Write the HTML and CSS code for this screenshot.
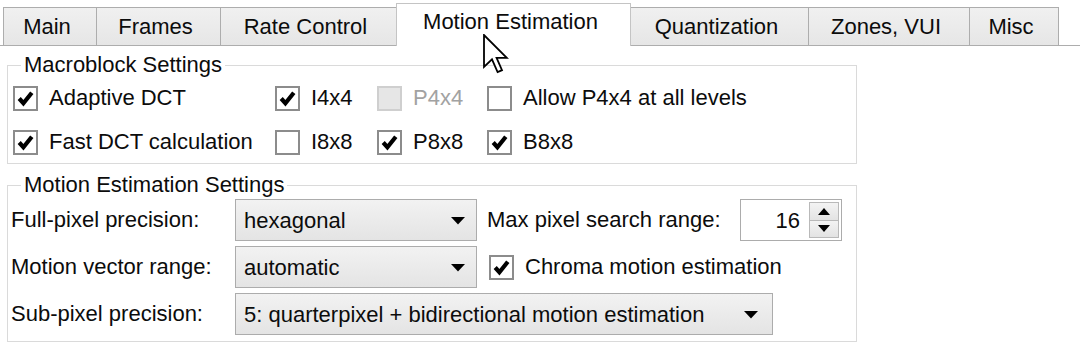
FILE: index.html
```html
<!DOCTYPE html>
<html>
<head>
<meta charset="utf-8">
<link rel="stylesheet" href="styles.css">
</head>
<body>
<div class="tabbar">
  <div class="tab w-main">Main</div>
  <div class="tab w-frames">Frames</div>
  <div class="tab w-rate">Rate Control</div>
  <div class="tab active w-motion">Motion Estimation</div>
  <div class="tab w-quant">Quantization</div>
  <div class="tab w-zones">Zones, VUI</div>
  <div class="tab last w-misc">Misc</div>
</div>

<fieldset class="group g1">
  <legend>Macroblock Settings</legend>
  <div class="mb-grid">
    <label class="cbx"><span class="box"><svg viewBox="0 0 20 20"><polyline points="4,10 8,14.5 16,4.5"/></svg></span>Adaptive DCT</label>
    <label class="cbx"><span class="box"><svg viewBox="0 0 20 20"><polyline points="4,10 8,14.5 16,4.5"/></svg></span>I4x4</label>
    <label class="cbx disabled"><span class="box"></span>P4x4</label>
    <label class="cbx"><span class="box"></span>Allow P4x4 at all levels</label>
    <label class="cbx"><span class="box"><svg viewBox="0 0 20 20"><polyline points="4,10 8,14.5 16,4.5"/></svg></span>Fast DCT calculation</label>
    <label class="cbx"><span class="box"></span>I8x8</label>
    <label class="cbx"><span class="box"><svg viewBox="0 0 20 20"><polyline points="4,10 8,14.5 16,4.5"/></svg></span>P8x8</label>
    <label class="cbx"><span class="box"><svg viewBox="0 0 20 20"><polyline points="4,10 8,14.5 16,4.5"/></svg></span>B8x8</label>
  </div>
</fieldset>

<fieldset class="group g2">
  <legend>Motion Estimation Settings</legend>
  <div class="me-grid">
    <div class="lbl">Full-pixel precision:</div>
    <div class="combo"><span class="val">hexagonal</span><svg class="arrow" viewBox="0 0 14 8"><path d="M0 0H14L7 7.5Z"/></svg></div>
    <div class="lbl">Max pixel search range:</div>
    <div class="spin">
      <span class="spin-val">16</span>
      <span class="spin-btns">
        <span class="sbtn"><svg viewBox="0 0 12 7"><path d="M0 7H12L6 0Z"/></svg></span>
        <span class="sbtn"><svg viewBox="0 0 12 7"><path d="M0 0H12L6 7Z"/></svg></span>
      </span>
    </div>

    <div class="lbl">Motion vector range:</div>
    <div class="combo"><span class="val">automatic</span><svg class="arrow" viewBox="0 0 14 8"><path d="M0 0H14L7 7.5Z"/></svg></div>
    <label class="cbx chroma"><span class="box"><svg viewBox="0 0 20 20"><polyline points="4,10 8,14.5 16,4.5"/></svg></span>Chroma motion estimation</label>

    <div class="lbl">Sub-pixel precision:</div>
    <div class="combo wide"><span class="val">5: quarterpixel + bidirectional motion estimation</span><svg class="arrow" viewBox="0 0 14 8"><path d="M0 0H14L7 7.5Z"/></svg></div>
  </div>
</fieldset>

<svg class="cursor" viewBox="-0.5 -0.5 13 20" width="26" height="40"><path d="M0 0V16L4 12.2L6.8 18.5L9 17.6L6.3 11.4H11.4Z"/></svg>
</body>
</html>
```

FILE: styles.css
```css
html, body {
  margin: 0;
  padding: 0;
  background: #ffffff;
}
body {
  width: 1080px;
  height: 364px;
  overflow: hidden;
  position: relative;
  font-family: "Liberation Sans", Arial, sans-serif;
  font-size: 22px;
  color: #0c0c0c;
}

/* ---------- tabs ---------- */
.tabbar {
  display: flex;
  align-items: flex-end;
  height: 46px;
  box-sizing: border-box;
  padding-left: 3px;
  border-bottom: 1px solid #adadad;
}
.tab {
  height: 38px;
  line-height: 38px;
  box-sizing: border-box;
  border: 1px solid #adadad;
  border-bottom: none;
  border-right: none;
  background: linear-gradient(#f0f0f0, #e6e6e6);
  text-align: center;
  white-space: nowrap;
  padding-right: 6px;
}
.tab.last { border-right: 1px solid #adadad; }
.tab.active {
  height: 43px;
  line-height: 36px;
  margin-bottom: -1px;
  background: #ffffff;
  border-color: #c4c4c4;
  border-right: 1px solid #c4c4c4;
}
.tab.active + .tab { border-left: none; }
.w-main { width: 93px; }
.w-frames { width: 124px; }
.w-rate { width: 176px; }
.w-motion { width: 235px; }
.w-quant { width: 177px; }
.w-zones { width: 161px; }
.w-misc { width: 90px; }

/* ---------- group boxes ---------- */
.group {
  width: 850px;
  box-sizing: border-box;
  min-width: 0;
  margin: 0 0 0 7px;
  border: 1px solid #dadada;
}
.group legend {
  padding: 0 3px;
  line-height: 26px;
}
.g1 {
  margin-top: 6px;
  padding: 0 0 1px 5px;
}
.g1 legend { margin-left: 8px; }
.g2 {
  margin-top: 8px;
  padding: 1px 0 6px 3px;
}
.g2 legend { margin-left: 10px; }

/* ---------- checkboxes ---------- */
.mb-grid {
  display: grid;
  grid-template-columns: 262px 102px 110px auto;
  grid-auto-rows: 40px;
  row-gap: 4px;
}
.cbx {
  display: flex;
  align-items: center;
  gap: 11px;
  white-space: nowrap;
}
.box {
  width: 25px;
  height: 25px;
  box-sizing: border-box;
  border: 2px solid #8c8c8c;
  background: #ffffff;
  display: flex;
  flex: none;
}
.box svg {
  width: 21px;
  height: 21px;
}
.box polyline {
  fill: none;
  stroke: #000;
  stroke-width: 4;
  stroke-linejoin: miter;
}
.cbx.disabled { color: #a2a2a2; }
.cbx.disabled .box {
  background: #e6e6e6;
  border-color: #cfcfcf;
}

/* ---------- motion estimation rows ---------- */
.me-grid {
  display: grid;
  grid-template-columns: 224px 252px 253px 102px;
  grid-auto-rows: 42px;
  row-gap: 5px;
  align-items: center;
}
.lbl { white-space: nowrap; }
.combo {
  width: 242px;
  height: 42px;
  box-sizing: border-box;
  border: 1px solid #acacac;
  background: linear-gradient(#f2f2f2, #e4e4e4);
  display: flex;
  align-items: center;
  justify-content: space-between;
  padding: 2px 11px 0 8px;
  white-space: nowrap;
}
.combo.wide {
  width: 538px;
  grid-column: 2 / span 2;
  padding-right: 14px;
}
.arrow {
  width: 14px;
  height: 8px;
  fill: #000;
  flex: none;
}
.chroma {
  margin-left: 2px;
  grid-column: 3 / span 2;
}

/* ---------- spin box ---------- */
.spin {
  height: 42px;
  box-sizing: border-box;
  border: 1px solid #acacac;
  background: #ffffff;
  display: flex;
  align-items: stretch;
}
.spin-val {
  flex: 1;
  text-align: right;
  padding: 2px 9px 0 0;
  line-height: 38px;
}
.spin-btns {
  width: 30px;
  margin: 2px 2px 2px 0;
  display: flex;
  flex-direction: column;
}
.sbtn {
  flex: 1;
  border: 1px solid #b9b9b9;
  background: linear-gradient(#f3f3f3, #e3e3e3);
  display: flex;
  align-items: center;
  justify-content: center;
}
.sbtn + .sbtn { border-top: none; }
.sbtn svg {
  width: 12px;
  height: 7px;
  fill: #000;
}

/* ---------- mouse pointer overlay ---------- */
.cursor {
  position: absolute;
  left: 483px;
  top: 34px;
}
.cursor path {
  fill: #ffffff;
  stroke: #000;
  stroke-width: 0.9;
  stroke-linejoin: miter;
}
```
